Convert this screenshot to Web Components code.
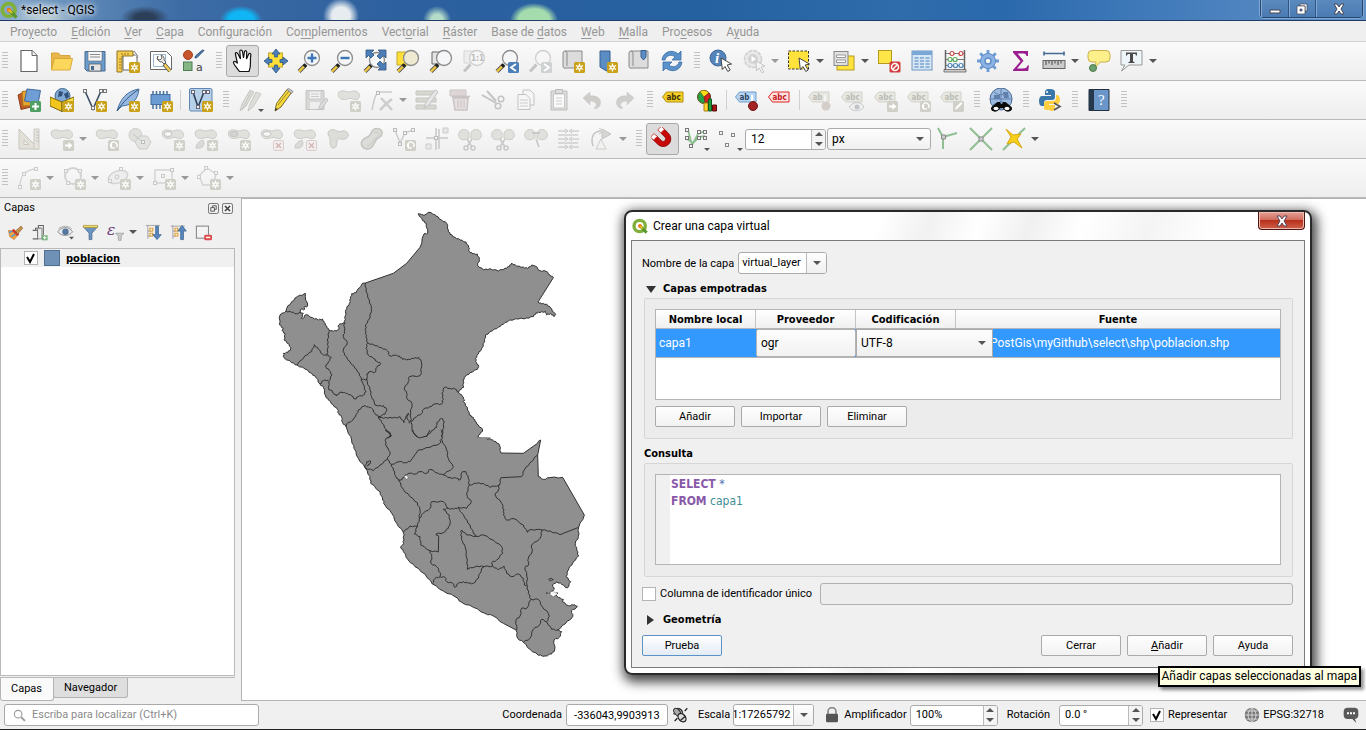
<!DOCTYPE html>
<html lang="es">
<head>
<meta charset="utf-8">
<title>*select - QGIS</title>
<style>
html,body{margin:0;height:100%}
body{font:11px/16px Roboto,"Liberation Sans",sans-serif;color:#000;background:#f0f0f0;overflow:hidden}
</style>
</head>
<body>
<qgis-window></qgis-window>
<script>
/* ---------- shared pieces ---------- */
const star = c => `<rect x="13" y="13" width="11" height="11" rx="1.500" fill="${c}"/><path d="M18.500 14.500v8M15 16.500l7 4M15 20.500l7-4" stroke="#fff" stroke-width="1.300"/><circle cx="18.500" cy="18.500" r="2.200" fill="#fff"/><circle cx="18.500" cy="18.500" r="1" fill="${c}"/>`;
const GOLD = '#c9a21a', DIM = '#d0d0c8';
const gold = star(GOLD), dim = star(DIM);
const badge = (inner, c = DIM) => `<rect x="13" y="13" width="11" height="11" rx="1.500" fill="${c}"/>${inner}`;
const arrowB = badge('<path d="M15 17.500h3.500V15l4 3.500-4 3.500v-2.500H15z" fill="#fff"/>');
const rotB = badge('<path d="M21.500 20a3.200 3.200 0 1 0-5 .500M16.500 17v3.800h3.500" fill="none" stroke="#fff" stroke-width="1.300"/>');
const xB = '<rect x="13.500" y="13.500" width="10" height="10" rx="1.500" fill="#f3eeee" stroke="#d8cccc"/><path d="M16 16l5 5M21 16l-5 5" stroke="#d5b8b8" stroke-width="1.600"/>';
const blob = '<path d="M1.500 8C0 3 5 2 9 3.500s5-1 9-.500c5 .500 6 7 2 8.500-3 1-5-2-8-1-4 1.500-9 2-10.500-2.500z" fill="#e0e0dc" stroke="#ccccc8"/>';
const mag = (x = 15, y = 9, c = '#f4f6f8', s = '#8c8c8c') => `<path d="M2 22.500l6.500-6.500" stroke="#555" stroke-width="4"/><path d="M2 22.500l5-5" stroke="#f0c93c" stroke-width="2.400"/><path d="M7 17.500l2-2" stroke="#222" stroke-width="3.500"/><circle cx="${x}" cy="${y}" r="7.500" fill="${c}" stroke="${s}" stroke-width="1.300"/>`;
const magDim = '<path d="M2 22.500l6.500-7" stroke="#c4c4c4" stroke-width="3"/><circle cx="15" cy="9" r="7.500" fill="#f6f6f6" stroke="#cfcfcf" stroke-width="1.300"/>';
const cursor = '<path d="M12 9l10.500 6-4.300 1 3 5-2.400 1.500-2.800-5-2.700 3z" fill="#fff" stroke="#444"/>';
const tag = (f, s, t, txt = 'abc') => `<path d="M.500 9l4-5H21v10H4.500z" fill="${f}" stroke="${s}"/><text x="4.500" y="12" font-family="DejaVu Sans Condensed" font-weight="700" font-size="8" fill="${t}">${txt}</text>`;
const tagDim = t => tag('#e8e8e2', '#d2d2cb', '#bcbcb7', t);
const scissors = '<path d="M9 12l5 8M14 12l-5 8" stroke="#c8c8c8" stroke-width="1.500"/><circle cx="8" cy="21" r="2" fill="none" stroke="#c8c8c8" stroke-width="1.500"/><circle cx="15" cy="21" r="2" fill="none" stroke="#c8c8c8" stroke-width="1.500"/>';
const lobes = '<path d="M11 11C2 16-1 9 1.500 5s8-3 9.500 1zM13 11c9 5 12-2 9.500-6s-8-3-9.500 1z" fill="#e0e0dc" stroke="#ccccc8"/>';
const nodes = (pts, c = '#bbb') => pts.map(([x, y]) => `<rect x="${x - 1.5}" y="${y - 1.5}" width="3" height="3" fill="#f4f4f4" stroke="${c}"/>`).join('');
const roll = '<path d="M4 2h17v17H5a2 2 0 0 1-3-2V4a2 2 0 0 1 4 0v13" fill="#dcdcdc" stroke="#8a8a8a"/>';

const ICONS = {
 new:'<path d="M4 1.500h11l5 5v16H4z" fill="#fff" stroke="#666" stroke-width="1.200"/><path d="M15 1.500v5h5" fill="#eee" stroke="#666"/>',
 open:'<path d="M1.500 20.500V4h7l2 2.500h9.500v3" fill="#e8b64a" stroke="#d6a53c"/><path d="M1.500 21L4.500 9.500h18L20 21z" fill="#fbd85c" stroke="#dba93a"/>',
 save:'<path d="M2 2.500h20v19.500H4l-2-2z" fill="#6a9cce" stroke="#45698f"/><path d="M5 2.500h14V12H5z" fill="#f7f7f7" stroke="#666" stroke-width=".600"/><path d="M7 5.500h10M7 8h10" stroke="#888"/><path d="M6 15h12v7H6z" fill="#e4e4e4" stroke="#555" stroke-width=".700"/><path d="M8 17h3v4H8z" fill="#45698f"/>',
 layout:'<path d="M7 6h14v15H7z" fill="#fff" stroke="#666"/><path d="M18 2l3 4v3" fill="#fff" stroke="#777"/><path d="M1 2h16v5H6v16H1z" fill="#f5cf52" stroke="#8d7323"/><path d="M6 4v2M9 4v2M12 4v2M3 10h2M3 13h2M3 16h2M3 19h2" stroke="#a5740f"/>'+gold,
 manager:'<path d="M1.500 2.500h16l5 5v13H1.500z" fill="#fff" stroke="#666"/><path d="M4.500 5.500h12v12h-12z" fill="none" stroke="#9bb5d0"/><path d="M9 7a4 4 0 0 0 4 6l2 2 2-2-2-2a4 4 0 0 0-3-5l1 3-2 2-3-1z" fill="#e8e8e8" stroke="#666"/><path d="M15 15l6 7" stroke="#555" stroke-width="4"/><path d="M15.500 15.500l5.500 6.500" stroke="#f3ce50" stroke-width="2.500"/>',
 style:'<circle cx="6" cy="6" r="4.500" fill="#c8562c" stroke="#a33f1c"/><path d="M22 1.500l-7 7-2 .500.500-2 7-6z" fill="#4d7cae" stroke="#2f5580"/><rect x="1.500" y="13" width="8.500" height="8.500" fill="#86b586" stroke="#4e7d52"/><text x="14" y="22" font-family="DejaVu Sans" font-size="11" fill="#444">a</text>',
 hand:'<path d="M8.500 22.500c-2-3-6-7-6-9 0-1.500 2-2 4 1L4.500 5.500c-.500-2.500 1.500-2.500 2.500-.500L9.500 10 8.800 2.500c0-2 2.200-2 2.700 0L12.500 9l.900-6c.400-2 2.500-1.500 2.300.500L15.500 10l2-4.500c1-2 2.800-1 2.300.800C18.500 12 21 16 18 22.500z" fill="#fff" stroke="#111" stroke-width="1.200"/>',
 pansel:'<rect x="4.500" y="4" width="14" height="14" fill="#ffe03a" stroke="#c2a72a"/><path d="M12 0l4 5h-2.500v3h-3V5H8zM12 24l4-5h-2.500v-3h-3v3H8zM0 12l5-4v2.500h3v3H5V16zM24 12l-5-4v2.500h-3v3h3V16z" fill="#4c7fb8" stroke="#2f577f" stroke-width=".800"/>',
 zin:mag()+'<path d="M15 4.500v9M10.500 9h9" stroke="#3d76b5" stroke-width="2.400"/>',
 zout:mag()+'<path d="M10.500 9h9" stroke="#3d76b5" stroke-width="2.400"/>',
 zfull:mag(14,11)+'<path d="M3 1h8L8.500 3.500 11 6 8 9 5.500 6.500 3 9zM23 1v8l-2.500-2.500L17 10l-3-3 3.500-3.500L15 1zM23 21h-8l2.500-2.500L14 15l3-3 3.500 3.500L23 13z" fill="#4c7fb8" stroke="#2f577f" stroke-width=".800"/>',
 zsel:'<path d="M1 3h12v13H1z" fill="#ffe03a" stroke="#c2a72a"/>'+mag(15,9,'#eeead2'),
 zlayer:'<path d="M3 3h12v12H3z" fill="#e5e5e5" stroke="#666"/>'+mag(),
 znative:'<path d="M2 2h12v12H2z" fill="#eee" stroke="#d5d5d5"/>'+magDim+'<text x="9" y="12" font-family="DejaVu Sans Condensed" font-weight="700" font-size="8" fill="#bbb">1:1</text>',
 zlast:mag()+badge('<path d="M21 15l-5 3.500 5 3.500" fill="none" stroke="#fff" stroke-width="1.800"/>','#4c7fb8'),
 znext:magDim+badge('<path d="M16 15l5 3.500-5 3.500" fill="none" stroke="#fff" stroke-width="1.800"/>','#cfd2d2'),
 mapnew:roll+gold,
 bmnew:'<path d="M6 2h10v16l-3.500 4L6 18z" fill="#5b8cc4" stroke="#36608f"/>'+gold,
 bmshow:roll+'<path d="M14 1.500h5V8l-2.500 3L14 8z" fill="#5b8cc4" stroke="#36608f"/>',
 refresh:'<path d="M2 11C3 2 13 0 18 5l3-3v9h-9l3-3C12 5 6 6 5 11zM22 13c-1 9-11 11-16 6l-3 3v-9h9l-3 3c3 3 9 2 10-3z" fill="#5b92cc" stroke="#3a6fa5" stroke-width=".800"/>',
 info:'<circle cx="9" cy="9" r="8" fill="#5584bb" stroke="#41699a"/><text x="6" y="14" font-family="Liberation Serif" font-style="italic" font-weight="700" font-size="15" fill="#fff">i</text>'+cursor,
 action:'<circle cx="11" cy="10" r="8.500" fill="#e8e8e8" stroke="#cfcfcf" stroke-width="1.500" stroke-dasharray="4 1"/><circle cx="11" cy="10" r="5" fill="#d3d3d3"/><path d="M9.500 7l4.500 3-4.500 3z" fill="#fff"/><path d="M14 12l9 5-4 1 3 5-2 1-3-5-2.500 3z" fill="#f4f4f4" stroke="#c6c6c6"/>',
 select:'<rect x="1.500" y="2" width="20" height="18" fill="#ffe23c" stroke="#333" stroke-dasharray="2.500 1.500"/>'+cursor,
 form:'<rect x="5" y="7" width="17" height="14" fill="#ffe23c" stroke="#b69a20"/><rect x="2" y="2.500" width="14" height="14" fill="#e1e1e1" stroke="#888"/><path d="M4.500 6h9v2.500h-9zM4.500 11h9v2.500h-9z" fill="#fff" stroke="#999"/>',
 desel:'<rect x="1.500" y="1.500" width="13" height="13" fill="#ffe648" stroke="#b69a20"/><rect x="12.500" y="12.500" width="11" height="11" rx="1.500" fill="#d23c3c"/><circle cx="18" cy="18" r="3.500" fill="none" stroke="#fff" stroke-width="1.500"/><path d="M15.500 20.500l5-5" stroke="#fff" stroke-width="1.500"/>',
 table:'<rect x="2" y="2" width="20" height="19" fill="#d5e6f5" stroke="#6f97c1"/><path d="M2 2h20v4H2z" fill="#7ba7d6"/><path d="M4.500 9h4M10 9h4M15.500 9h4M4.500 12h4M10 12h4M15.500 12h4M4.500 15h4M10 15h4M15.500 15h4M4.500 18h4M10 18h4M15.500 18h4" stroke="#7ba3ce" stroke-width="1.400"/>',
 abacus:'<path d="M2.500 1v21M21.500 1v21" stroke="#666" stroke-width="1.500"/><path d="M1 20.500h22v2.500H1z" fill="#ccc" stroke="#555" stroke-width=".700"/><path d="M3 4.500h18M3 10.500h18M3 16.500h18" stroke="#777"/><g fill="#fff" stroke-width="1.200"><g stroke="#cc4444"><circle cx="9" cy="4.500" r="2"/><circle cx="18" cy="4.500" r="2"/></g><g stroke="#58a858"><circle cx="7" cy="10.500" r="2"/><circle cx="12" cy="10.500" r="2"/></g><g stroke="#4c86b8"><circle cx="7" cy="16.500" r="2"/><circle cx="12.500" cy="16.500" r="2"/><circle cx="18" cy="16.500" r="2"/></g></g>',
 gear:'<g fill="none" stroke="#6d9bd4"><path d="M12 1v22M1 12h22M4.200 4.200l15.600 15.600M19.800 4.200L4.200 19.800" stroke-width="2.800"/></g><circle cx="12" cy="12" r="7.500" fill="#8db2e4" stroke="#5e8cc6"/><circle cx="12" cy="12" r="3" fill="#f4f4f4" stroke="#5e8cc6" stroke-width="1.500"/>',
 sum:'<path d="M4 2h15v5h-1.500c-.500-2-1.500-2.500-4-2.500H8.500l6 7.200-6.500 7.800h6c3 0 4-1 4.500-3H20l-.800 5.500H4V21l7.500-8.800L4 3.500z" fill="#9b1c8f"/>',
 measure:'<path d="M2 4.500h20M2 2.500v4M22 2.500v4" stroke="#456a92" stroke-width="1.600"/><rect x="1" y="11.500" width="22" height="8" fill="#ccc" stroke="#666"/><path d="M4 12v4M7 12v2.500M10 12v4M13 12v2.500M16 12v4M19 12v2.500" stroke="#444"/>',
 tip:'<path d="M5 1.500h14a4 4 0 0 1 4 4V9a4 4 0 0 1-4 4h-6l-5 6 1-6H5a4 4 0 0 1-4-4V5.500a4 4 0 0 1 4-4z" fill="#fdf08a" stroke="#c9b04d"/><circle cx="6" cy="19" r="3.500" fill="#6ca06c" stroke="#4a7a4e"/>',
 note:'<path d="M1 1.500h21V16H9l-7.500 6L5 16H1z" fill="#eef5f8" stroke="#999"/><path d="M6 3.500h11v3h-1l-.700-1.500H13v7.500l1.500.500v1h-6v-1l1.500-.500V5H7.700L7 6.500H6z" fill="#4a4a4a"/>',
 srcman:'<path d="M1 7l6-3 7 15-10 2.500z" fill="#c05a2a" stroke="#93421a"/><path d="M5 3.500l8-1 4 15-11 .500z" fill="#e8a52e" stroke="#a8761c"/><path d="M10 1l13.500 1.500L21 15.500 7.500 13z" fill="#6f9ed6" stroke="#41699a"/>'+badge('<path d="M18.500 15v7M15 18.500h7" stroke="#fff" stroke-width="2"/>','#4f9e62'),
 geopkg:'<circle cx="12.500" cy="8" r="7.500" fill="#7fa8d4" stroke="#43698f"/><path d="M9 3l4 1-1 4-4 1zM14 6l4-2 1 5-3 2z" fill="#2f4f77"/><path d="M0 9l12 5v9.500L0 18z" fill="#f2c61d" stroke="#7a6310"/><path d="M24 9l-12 5v9.500L24 18z" fill="#f9e14b" stroke="#7a6310"/>'+gold,
 vnew:'<path d="M2 3l8 18L18 3l4 0" fill="none" stroke="#3d4f66" stroke-width="1.600"/>'+nodes([[2,3],[18,3],[22,3],[10,20]],'#777')+gold,
 feather:'<path d="M1 23C4 12 10 3 23 1c-1 10-6 16-17 17z" fill="#94b8e2" stroke="#456f9f"/><path d="M1 23C7 14 14 7 22 2" fill="none" stroke="#35577f"/>'+gold,
 chip:'<path d="M4 3v18M7.500 3v18M11 3v18M14.500 3v18M18 3v10" stroke="#456f9f" stroke-width="1.500"/><rect x="2" y="6.500" width="19" height="10" fill="#6b9bd3" stroke="#456f9f"/>'+gold,
 virt:'<rect x=".500" y=".500" width="22.500" height="22.500" rx="1.500" fill="#b8d1ea" stroke="#5f87b1"/><path d="M4 4l5 15L15 4h4" fill="none" stroke="#2f4056" stroke-width="1.600"/>'+nodes([[4,4],[15,4],[19,4],[9,19]],'#667')+gold,
 edits:'<path d="M2 23l2-7L12 2l4 2-8 14zM10 23l2-7L18 4l5 2-8 13z" fill="#ddddd9" stroke="#c8c8c4"/><path d="M4 22l9-18" stroke="#c5c5c5"/>',
 pencil:'<path d="M4 23l1.500-7.500L16 1.500l4.500 3L10 19z" fill="#f7d83c" stroke="#77682a"/><path d="M7 17L18 3" stroke="#a08a2c"/><path d="M16 1.500l1.500-1 4.500 3-1.500 2z" fill="#ccc" stroke="#888"/><path d="M4 23l.700-3 2 1z" fill="#333"/>',
 savee:'<path d="M2 2.500h18v19H2z" fill="#d8d8d6" stroke="#c4c4c2"/><path d="M5 3h12v8H5z" fill="#f1f1f1" stroke="#cacaca"/><path d="M7 6h8M7 8.500h8" stroke="#cacaca"/><path d="M6 14h10v7H6z" fill="#eee"/><path d="M14 22l2-5 6-7 2 2-6 8z" fill="#ddd" stroke="#c2c2c2"/>',
 addpoly:blob+dim,
 vertex:'<path d="M2 22C4 12 5 5 10 4h12" fill="none" stroke="#cacaca" stroke-width="1.500"/>'+nodes([[8,5]])+'<path d="M11 10l11 12M22 11l-6 5-6 6" stroke="#cdcdcb" stroke-width="2.500"/>',
 multi:'<path d="M1 3h20v4H1zM1 10h20v4H1zM1 17h20v4H1z" fill="#d8d8d2" stroke="#c6c6c1"/><path d="M9 20l2-6 9-12 3 2-9 13z" fill="#e6e6e6" stroke="#c2c2c2"/>',
 trash:'<path d="M2 2h16v6H2z" fill="#ded6d6" stroke="#cac6c4"/><path d="M5 10h15l-1 12H7zM4 8.500h18" fill="#e5dfdf" stroke="#cac4c4" stroke-width="1.500"/><path d="M10 12v8M13 12v8M16 12v8" stroke="#cac4c4"/>',
 cut:'<path d="M1 7l14 8M6 3l9 10" stroke="#c4c4c4" stroke-width="2"/><circle cx="20" cy="11" r="2.800" fill="none" stroke="#c4c4c4" stroke-width="1.500"/><circle cx="17" cy="18" r="2.800" fill="none" stroke="#c4c4c4" stroke-width="1.500"/>',
 copy:'<path d="M9 2h7l4 4v11H9z" fill="#f6f6f6" stroke="#c2c2c2"/><path d="M4 6.500h8l4 4v11H4z" fill="#f6f6f6" stroke="#c2c2c2"/><path d="M6 12h8M6 15h8M6 18h8" stroke="#ccc"/>',
 paste:'<path d="M4 3h16v19H4z" fill="#dcdcda" stroke="#bdbdbb"/><path d="M6.500 6h11v14h-11z" fill="#fafafa" stroke="#c8c8c8"/><path d="M8.500 1.500h7v4h-7z" fill="#ddd" stroke="#bbb"/><path d="M9 10h6M9 13h6M9 16h6" stroke="#ccc"/>',
 undo:'<path d="M3 10l7-6v4c8-1 12 4 10 9-1 3-4 4-6 3 4-2 3-7-4-7v4z" fill="#cfcdca" stroke="#c5c3c0" stroke-width=".500"/>',
 redo:'<path d="M21 10l-7-6v4C6 7 2 12 4 17c1 3 4 4 6 3-4-2-3-7 4-7v4z" fill="#cfcfcd" stroke="#c5c5c3" stroke-width=".500"/>',
 lab:tag('#f5cf24','#b08f12','#3c3208'),
 diag:'<circle cx="9" cy="9" r="6.500" fill="#27a144" stroke="#5a4a10"/><path d="M9 9L5 3.500a6.500 6.500 0 0 1 9 1.500z" fill="#ffdc18" stroke="#5a4a10" stroke-width=".500"/><path d="M9 9l5-4a6.500 6.500 0 0 1-4 10z" fill="#d92020" stroke="#5a1010" stroke-width=".500"/><path d="M9 15h4v8H9z" fill="#ffd428" stroke="#a87f12"/><path d="M13.500 11h3v12h-3z" fill="#1f9a3c" stroke="#0f5a20"/><path d="M17.500 17h4v6h-4z" fill="#a81616" stroke="#5a0c0c"/>',
 labpin:tag('#b9d5f4','#6f9cc9','#2c4767','ab')+'<path d="M17 7v9" stroke="#fff" stroke-width="2"/><circle cx="18" cy="18" r="4.500" fill="#a32222" stroke="#701414"/>',
 labred:tag('#ffe3e3','#d22','#c81a1a'),
 lpin:tagDim('ab')+'<path d="M17 7v9" stroke="#f4f4f4" stroke-width="2"/><circle cx="18" cy="18" r="4.500" fill="#d4cecb"/>',
 leye:tagDim('abc')+'<path d="M8 19c4-6 12-6 15 0-4 5-11 5-15 0z" fill="#eee" stroke="#c8c8c8"/><circle cx="16" cy="19" r="2.500" fill="#c0c4c8"/>',
 lmove:tagDim('abc')+arrowB,
 lrot:tagDim('abc')+rotB,
 ledit:tagDim('abc')+badge('<path d="M15 22l1-3 5-5 1.500 1.500-5 5z" fill="#fff"/>'),
 metas:'<circle cx="12" cy="11" r="11" fill="#9dbbe0" stroke="#4a6a94"/><path d="M5 4c6 5 10 2 14 0M1 11h22M12 0v22M4 17c5-4 11-4 16 0" stroke="#5f7fac" fill="none"/><path d="M5 7h6v4H5zM14 4h5l1 6h-5z" fill="#5f80ab"/><path d="M8.500 14h2.500l1 2h1l1-2h2.500l6 5c2 3-2 6-6 4l-3-3h-2l-3 3c-4 2-8-1-6-4z" fill="#0a0a0a"/><ellipse cx="7" cy="20.500" rx="2.500" ry="1.800" fill="#fff"/><ellipse cx="18" cy="20.500" rx="2.500" ry="1.800" fill="#fff"/>',
 python:'<path d="M12 1c-5 0-5 2-5 4v2h6v1H4C2 8 1 10 1 13s1 5 3 5h2v-3c0-2 1-3 3-3h5c2 0 3-1 3-3V4c0-2-2-3-5-3z" fill="#3a77a8"/><path d="M12 23c5 0 5-2 5-4v-2h-6v-1h8c2 0 3-2 3-4s-1-5-3-5h-1v3c0 2-1 3-3 3H9c-2 0-3 1-3 3v4c0 2 2 2 6 2z" fill="#fbcf3f"/><circle cx="9" cy="4" r="1" fill="#fff"/><path d="M16 15l6 3.500-6 3.500" fill="none" stroke="#555" stroke-width="1.600"/>',
 help:'<path d="M2 1.500h20v21H2z" fill="#6b96ca" stroke="#23313f"/><path d="M2 1.500h5v21H2z" fill="#26394c"/><text x="11" y="17" font-family="Liberation Serif" font-size="15" fill="#fff">?</text>',
 cad:'<path d="M2 2v20h20zM7 13v4.500h4.500z" fill="#e3e0d9" stroke="#c9c6be" fill-rule="evenodd"/><path d="M17 2h5v20h-5z" fill="#e8e5de" stroke="#ccc9c1"/><path d="M19 5h3M19 8h3M19 11h3M19 14h3" stroke="#c2c2c2"/>',
 move:blob+arrowB, rotate:blob+rotB,
 simplify:'<circle cx="7.500" cy="8" r="6.500" fill="#e0e0dc" stroke="#ccccc8"/><path d="M11 9h8l4 6-4 7h-8l-4-7z" fill="#e2e4e2" stroke="#ccccc8"/><path d="M5 7l10 8" stroke="#c6c6c6"/>'+nodes([[15,15]]),
 ring:blob+'<ellipse cx="7" cy="7" rx="4" ry="2.500" fill="#f7f7f7" stroke="#c2c2c2"/>'+dim,
 part:blob+'<path d="M2 21c0-5 4-7 7-8 2 4 1 9-7 8z" fill="#d9dbd9" stroke="#cacac6"/>'+dim,
 fill:blob+'<ellipse cx="7" cy="7" rx="4" ry="2.500" fill="#d3d6d3" stroke="#c2c2c2"/>'+dim,
 delring:blob+'<ellipse cx="7" cy="7" rx="4" ry="2.500" fill="#f7f7f7" stroke="#c2c2c2"/>'+xB,
 delpart:blob+'<path d="M2 21c0-5 4-7 7-8 2 4 1 9-7 8z" fill="#d9dbd9" stroke="#cacac6"/>'+xB,
 reshape:'<path d="M2 6c1-4 6-4 9-2s5-1 8 0c5 2 4 7 0 8s-5-1-7 0 0 8-4 9-4-5-4-9c0-2-2-3-2-6z" fill="#dcdcd8" stroke="#c8c8c4"/>',
 offset:'<path d="M14 3c3-3 10-1 9 4-1 4-4 3-6 6s-3 9-8 9-8-4-6-8 6-3 8-6 1-3 3-5z" fill="#dcdcd8" stroke="#c4c4c0" stroke-width="1.500"/><path d="M15 6c3-2 6 0 5 2s-4 3-6 6-3 5-6 5" fill="none" stroke="#c8c8c4"/>',
 splitv:'<path d="M3 3l5 13 5-10 8-3" fill="none" stroke="#ccc" stroke-width="1.500"/>'+nodes([[3,3],[8,17],[13,6],[21,3]])+rotB,
 merge:'<path d="M1 11h22M11 1v22M14 2v20" stroke="#c8c8c8" stroke-width="1.500"/>'+nodes([[11,11],[21,3],[3,20]])+'<path d="M18 1h5v5h-5zM1 17h5v5H1z" fill="#ebe6e6" stroke="#ccc"/>',
 split1:lobes+scissors, split2:lobes+'<g>'+scissors+'</g>',
 merge2:lobes+'<path d="M8 6h8M12 12l3 8" stroke="#c4c4c4" stroke-width="1.500"/>',
 attrs:'<path d="M1 4h8M14 4h8M1 12h8M14 12h8M1 20h8M14 20h8M1 8h20M1 16h20" stroke="#d0d0ce" stroke-width="1.500"/><path d="M8 2l3 2-3 2M15 2l-3 2 3 2M8 10l3 2-3 2M15 10l-3 2 3 2M8 18l3 2-3 2M15 18l-3 2 3 2" fill="none" stroke="#c4c4c4"/>',
 rotsym:'<path d="M3 19C0 10 4 4 11 4" fill="none" stroke="#c4c4c4" stroke-width="1.500"/><path d="M9 1l5 3-5 3" fill="none" stroke="#c4c4c4"/><path d="M12 2l9 5-9 5z" fill="#d4d6d4" stroke="#c6c6c4"/><path d="M11 12l5 10H6z" fill="#f2f2f0" stroke="#ccccca"/>',
 magnet:'<g transform="rotate(-45 12 12) translate(2 1) scale(.850)"><path d="M3 4v9a9 9 0 0 0 18 0V4h-6v9a3 3 0 0 1-6 0V4z" fill="#c90808" stroke="#8d0808"/><path d="M3 1h6v5H3zM15 1h6v5h-6z" fill="#fff" stroke="#c33"/></g>',
 snapv:'<path d="M4 3l4 15 6-11 7-3M3 12l6 4 6-6 6-1" fill="none" stroke="#8cc08f" stroke-width="1.800"/>'+nodes([[3,3],[15,5],[21,5],[7,19],[15,11],[21,11],[3,11]],'#777'),
 snapn:nodes([[4,6],[16,8],[10,18]],'#888'),
 topo:'<path d="M2 1l5 9M7 10v12M7 10l14-4" stroke="#8fbf93" stroke-width="2"/><path d="M5.500 8h4v4h-4z" fill="#ccc" stroke="#888"/>',
 cross:'<path d="M1 1l22 22M23 1L1 23" stroke="#8fbf93" stroke-width="2"/><path d="M10 10h4v4h-4z" fill="#ccc" stroke="#888"/>',
 trace:'<path d="M23 1L1 23" stroke="#8fbf93" stroke-width="2"/><path d="M4 2l7 6 8-1-4 5 5 9-8-6-7 2 4-7z" fill="#f5cf18" stroke="#d9a70f"/>',
 arc:'<path d="M3 21C3 9 8 4 19 3" fill="none" stroke="#d3d3d3" stroke-width="1.300"/>'+nodes([[3,21],[7,8],[19,3]],'#ccc')+dim,
 circ:'<circle cx="11" cy="10" r="8" fill="none" stroke="#d3d3d3" stroke-width="2"/>'+nodes([[4,5],[18,5],[6,17]],'#ccc')+dim,
 elli:'<ellipse cx="11" cy="11" rx="10" ry="6" transform="rotate(-20 11 11)" fill="#eee" stroke="#d3d3d3" stroke-width="1.500"/><circle cx="10" cy="11" r="2" fill="none" stroke="#c8c8c8"/>'+nodes([[14,3],[3,15]],'#ccc')+dim,
 rect:'<path d="M3 4h17v13H3z" fill="none" stroke="#d3d3d3" stroke-width="1.500"/>'+nodes([[3,17],[20,4],[11,10]],'#c8c8c8')+dim,
 pent:'<path d="M10 2l9 6-3 11H6L2 10z" fill="none" stroke="#d3d3d3" stroke-width="1.500"/>'+nodes([[9,2],[2,11],[19,7]],'#ccc')+dim,
 brush:'<path d="M2 9l7 1 6 6-5 6-6-4z" fill="#f0a63a" stroke="#c9742a"/><path d="M3 12l5-2M6 18l6-4" stroke="#4d9be0" stroke-width="2"/><path d="M8 8l8 8" stroke="#cc3e2c" stroke-width="4"/><path d="M12 10l8-7 2 3-7 8z" fill="#c99552" stroke="#8a5a22"/>',
 group:'<path d="M1 9h7v12H1M5 9V6h8M9 6V2h7v14" fill="none" stroke="#666" stroke-width="1.500"/><path d="M8 6h6v15H8z" fill="#eee" stroke="#666"/><path d="M14 16h8v7h-8z" fill="#6fae75"/><path d="M18 17v5M15.500 19.500h5" stroke="#fff" stroke-width="1.500"/>',
 eye:'<path d="M1 11C6 3 17 3 22 11c-5 7-16 7-21 0z" fill="#e6e9ec" stroke="#777"/><circle cx="12" cy="11" r="4.500" fill="#56759c"/><path d="M2 7c5-5 15-5 19 0" fill="none" stroke="#999"/><path d="M17 18h7l-3.500 4z" fill="#555"/>',
 funnel:'<path d="M2 4h20l-8 9v9h-4v-9z" fill="#6b94c2" stroke="#42658c"/><path d="M2 2h20v3H2z" fill="#f2dc68" stroke="#a89138"/>',
 eps:'<text x="0" y="15" font-family="DejaVu Serif" font-size="22" font-style="italic" fill="#6a3a78">ε</text><path d="M12 13h12l-4 4v6h-4v-6z" fill="#ccc" stroke="#999"/>',
 expand:'<path d="M4 2v19M1 2h20M4 10h5M4 17h5" stroke="#888" fill="none"/><path d="M7 6h4v4H7zM7 13h4v4H7z" fill="#fff" stroke="#e29a28" stroke-width="1.500"/><path d="M15 3h4v12h4l-6 7-6-7h4z" fill="#5787bd" stroke="#345d8c"/>',
 collapse:'<path d="M4 2v19M1 3h20M4 10h5M4 17h5" stroke="#888" fill="none"/><path d="M7 6h4v4H7zM7 13h4v4H7z" fill="#fff" stroke="#e29a28" stroke-width="1.500"/><path d="M15 22h4V10h4l-6-8-6 8h4z" fill="#5787bd" stroke="#345d8c"/>',
 remove:'<rect x="2" y="3" width="17" height="17" fill="#f4f4f4" stroke="#888" stroke-width="1.500"/><rect x="13" y="15" width="11" height="8" rx="2" fill="#dd4d4d"/><path d="M15.500 19h6" stroke="#fff" stroke-width="2"/>',
 float:'<rect x="1" y="1" width="22" height="22" rx="4" fill="none" stroke="#666" stroke-width="2"/><path d="M6 10h8v8H6zM10 10V6h8v8h-4" fill="none" stroke="#555" stroke-width="2"/>',
 close:'<rect x="1" y="1" width="22" height="22" rx="4" fill="none" stroke="#666" stroke-width="2"/><path d="M6.500 6.500l11 11M17.500 6.500l-11 11" stroke="#444" stroke-width="3.500"/>',
 logo:'<circle cx="11.500" cy="12" r="8.500" fill="none" stroke="#7fb03a" stroke-width="5"/><path d="M12 12l10 10" stroke="#5b9630" stroke-width="4.500"/><circle cx="12" cy="12" r="3" fill="#ee7913"/><path d="M12 12l4 4" stroke="#f0c020" stroke-width="2.500"/>',
 search:'<circle cx="9.500" cy="9.500" r="7" fill="none" stroke="#999" stroke-width="2"/><path d="M15 15l7 7" stroke="#999" stroke-width="3.500"/>',
 mouse:'<path d="M3 5c4-4 8 0 10 4M8 2c6 0 8 5 8 8M2 10l15 3" fill="none" stroke="#333" stroke-width="2"/><ellipse cx="8" cy="8" rx="4" ry="7" transform="rotate(-40 8 8)" fill="#aaa" stroke="#333" stroke-width="1.500"/><ellipse cx="15" cy="16" rx="5" ry="7" transform="rotate(-40 15 16)" fill="#ddd" stroke="#222" stroke-width="2"/><path d="M13 20l7-6M19 6l4-4M4 21l4-4" stroke="#222" stroke-width="2"/>',
 lock:'<path d="M6 12V7a6 6 0 0 1 12 0v5" fill="none" stroke="#888" stroke-width="2.500"/><rect x="3" y="10" width="18" height="13" rx="2" fill="#555"/>',
 globe:'<circle cx="12" cy="12" r="11" fill="#777"/><path d="M12 1v22M1 12h22M4 6h16M4 18h16M12 1c-8 6-8 16 0 22M12 1c8 6 8 16 0 22" stroke="#e8e8e8" fill="none" stroke-width="1.200"/>',
 chat:'<path d="M7 1h10a6 6 0 0 1 6 6v5a6 6 0 0 1-5 6l2 6-6-6H7a6 6 0 0 1-6-6V7a6 6 0 0 1 6-6z" fill="#5a5a5a"/><path d="M6 8h3v3H6zM10.500 8h3v3h-3zM15 8h3v3h-3z" fill="#fff"/>'
};

class Piece extends HTMLElement {
  render(css, html) {
    const t = document.createElement('template');
    t.innerHTML = `<style>*{box-sizing:border-box}button,input,select{font:inherit;color:inherit;margin:0}${css}</style>${html}`;
    this.attachShadow({ mode: 'open' }).append(t.content.cloneNode(true));
  }
}
const define = (name, css, html) => customElements.define(name, class extends Piece {
  constructor() { super(); this.render(css, html); }
});
/* these read their attributes, so their content is built on connection */
const defineLate = (name, css, html) => customElements.define(name, class extends Piece {
  connectedCallback() { if (!this.shadowRoot) this.render(css, html(this)); }
});
const attr = (el, n, d = '') => el.getAttribute(n) ?? d;

defineLate('q-icon', ':host{display:inline-block;flex:none;width:24px;height:24px}svg{display:block;width:100%;height:100%}',
  el => `<svg viewBox="0 0 24 24" aria-hidden="true">${ICONS[attr(el, 'name')]}</svg>`);

defineLate('tool-button', `
:host{display:block;flex:none}
button{display:flex;align-items:center;justify-content:center;width:33px;height:32px;padding:0;border:1px solid transparent;border-radius:3px;background:none;position:relative}
:host([menu]) button{width:45px;justify-content:flex-start;padding-left:4px;gap:5px}
:host([on]) button{background:#dcdcdc;border-color:#a8a8a8}
i{width:0;border:4px solid transparent;border-top-color:#555;border-bottom:0}
:host([dimmenu]) i{border-top-color:#999}
:host([mini]) i{position:absolute;right:1px;bottom:3px;border-width:3px;border-bottom:0}`,
  el => `<button aria-label="${attr(el, 'label', attr(el, 'icon'))}"><q-icon name="${attr(el, 'icon')}"></q-icon>${el.hasAttribute('menu') || el.hasAttribute('mini') ? '<i></i>' : ''}</button>`);

define('tool-grip', `:host{display:flex;flex:none;width:16px;height:18px;padding-right:4px;justify-content:flex-end}
:host(:first-child){width:12px}
span{width:6px;background:conic-gradient(#b8b8b8 90deg,transparent 0) 1px 1px/3px 3px;background:linear-gradient(#c2c2c2,#c2c2c2) 0 0/1px 1px,linear-gradient(90deg,#bebebe 1px,transparent 1px) 0 0/3px 3px;-webkit-mask:linear-gradient(#000 1px,transparent 1px) 0 0/3px 3px}`, '<span></span>');
define('tool-sep', ':host{display:flex;flex:none;width:7px;height:20px;justify-content:center}span{width:1px;background:#d0d0d0}', '<span></span>');
define('tool-row', ':host{display:flex;align-items:center;height:39px;background:linear-gradient(#fafafa,#eee);border-bottom:1px solid #b9b9b9}', '<slot></slot>');

defineLate('spin-box', `
:host{display:flex;background:#fff;border:1px solid #aaa;border-radius:3px;height:21px;overflow:hidden}
input{flex:1;min-width:0;border:0;padding:0 5px;outline:0;background:none}
span{display:flex;flex-direction:column;width:14px;border-left:1px solid #bbb;background:#f4f4f4}
button{flex:1;border:0;background:none;padding:0;display:flex;align-items:center;justify-content:center}
i{border:4px solid transparent;border-top-color:#555;border-bottom:0}i.up{border-bottom:4px solid #555;border-top:0}`,
  el => `<input aria-label="${attr(el, 'label')}" value="${attr(el, 'value')}"><span><button aria-label="Aumentar"><i class="up"></i></button><button aria-label="Reducir"><i></i></button></span>`);

defineLate('edit-combo', `
:host{display:flex;background:#fff;border:1px solid #aaa;border-radius:3px;height:22px;overflow:hidden}
input{flex:1;min-width:0;border:0;padding:0 0 0 3px;outline:0;background:none}
:host([clip]) input{text-indent:-2px;padding:0}
button{width:20px;border:0;border-left:1px solid #bbb;background:linear-gradient(#fdfdfd,#f0f0f0);padding:0;display:flex;align-items:center;justify-content:center}
i{border:4px solid transparent;border-top-color:#555;border-bottom:0}`,
  el => `<input aria-label="${attr(el, 'label')}" value="${attr(el, 'value')}"><button aria-label="Desplegar"><i></i></button>`);

defineLate('pick-list', `
:host{display:flex;position:relative;height:22px}
select{appearance:none;width:100%;border:1px solid #aaa;border-radius:3px;background:linear-gradient(#fdfdfd,#f0f0f0);padding:0 4px;outline:0}
:host([flat]) select{border-radius:0}
i{position:absolute;right:7px;top:50%;margin-top:-2px;border:4px solid transparent;border-top-color:#555;border-bottom:0;pointer-events:none}`,
  el => `<select aria-label="${attr(el, 'label')}"><option>${attr(el, 'value')}</option></select><i></i>`);

define('push-button', `
:host{display:block;width:80px}
button{width:100%;height:21px;padding:0;border:1px solid #aaa;border-radius:2px;background:linear-gradient(#fefefe,#f2f2f2);font-size:11px}
:host([primary]) button{border-color:#5b93c9;background:linear-gradient(#fff,#e3ebf4)}`, '<button><slot></slot></button>');

defineLate('check-field', `
:host{display:flex}label{display:flex;align-items:center;gap:var(--gap,4px)}
input{appearance:none;width:14px;height:14px;background:#fff;border:1px solid #b4b4b4;display:grid;place-items:center}
svg{width:12px;height:12px;display:none;grid-area:1/1;pointer-events:none}
span{display:grid}span input{grid-area:1/1}span svg{margin:1px}
input:checked+svg{display:block}`,
  el => `<label><span><input type="checkbox" ${el.hasAttribute('checked') ? 'checked' : ''}><svg viewBox="0 0 12 12" aria-hidden="true"><path d="M2 5l3 5 4-8" fill="none" stroke="#000" stroke-width="2"/></svg></span><slot></slot></label>`);

/* ---------- window frame ---------- */
define('title-bar', `
:host{display:flex;align-items:center;height:21px;padding-right:3px;font-size:12px;border-bottom:1px solid #1f3b66;
background:radial-gradient(ellipse 40px 20px at 45px 20px,#d9e3dccc,transparent),
radial-gradient(ellipse 24px 12px at 145px 18px,#2c3e58 40%,transparent),radial-gradient(ellipse 21px 14px at 241px 20px,#0fb5f5 60%,transparent),
radial-gradient(ellipse 18px 18px at 341px 16px,#e6ecf0 50%,transparent),radial-gradient(ellipse 14px 14px at 437px 20px,#b4dcc8 40%,transparent),
radial-gradient(ellipse 24px 17px at 534px 20px,#a4dcae 65%,transparent),
linear-gradient(90deg,#86aacd 0,#5984b4 95px,#3d6ca5 180px,#2d609f 400px,#2561a0 700px,#2e6cab 900px,#2a69ac 1000px,#3c77b8 1120px,#6090c6 100%)}
q-icon{width:18px;height:18px}
h1{font:inherit;margin:0 auto 0 3px;text-shadow:0 0 4px #fff,0 0 8px #fff}
div{display:flex;align-self:flex-start;height:18px;border:1px solid #24466f;border-top:0;border-radius:0 0 4px 4px;box-shadow:0 0 0 1px #7fa8d4}
button{width:27px;padding:0;border:0;border-left:1px solid #2d5484;background:linear-gradient(#5b89bd,#4a7bb3);box-shadow:inset 1px 0 #84abd6;display:flex;align-items:center;justify-content:center}
button:last-child{width:47px}button:first-child{border-left:0}svg{width:14px;height:12px}`,
`<q-icon name="logo"></q-icon><h1>*select - QGIS</h1>
<div><button aria-label="Minimizar"><svg viewBox="0 0 14 12"><path d="M2 7h10v3H2z" fill="#fff" stroke="#445"/></svg></button>
<button aria-label="Restaurar"><svg viewBox="0 0 14 12"><path d="M5 1h7v7h-2V3H5z" fill="#fff" stroke="#445" stroke-width=".700"/><path d="M2 3h8v8H2zM5 6v2h2V6z" fill="#fff" fill-rule="evenodd" stroke="#445" stroke-width=".700"/></svg></button>
<button aria-label="Cerrar"><svg viewBox="0 0 14 12"><path d="M2 1h3l2 3 2-3h3L9 6l3 5H9L7 8l-2 3H2l3-5z" fill="#fff" stroke="#445"/></svg></button></div>`);

const MENUS = ['Pro<u>y</u>ecto', '<u>E</u>dición', '<u>V</u>er', '<u>C</u>apa', 'Confi<u>g</u>uración', 'Co<u>m</u>plementos', 'Vect<u>o</u>rial', '<u>R</u>áster', 'Base de <u>d</u>atos', '<u>W</u>eb', '<u>M</u>alla', 'Pro<u>c</u>esos', 'A<u>y</u>uda'];
define('menu-bar', `:host{display:block;background:#efefef;border-bottom:1px solid #d0d0d0}
nav{display:flex;gap:14px;height:20px;align-items:center;padding:1px 0 0 10px;font-size:12px;color:#969696}
button{padding:0;border:0;background:none}u{text-underline-offset:2px}`, `<nav>${MENUS.map(m => `<button>${m}</button>`).join('')}</nav>`);

/* Row script: "|" grip, "/" separator, suffix v menu, V dim menu, m mini arrow, * pressed */
const tools = s => s.split(' ').map(w => {
  if (w === '|') return '<tool-grip></tool-grip>';
  if (w === '/') return '<tool-sep></tool-sep>';
  const [n, f = ''] = w.split(':');
  return `<tool-button icon="${n}" ${/[vV]/.test(f) ? 'menu' : ''} ${/V/.test(f) ? 'dimmenu' : ''} ${/m/.test(f) ? 'mini' : ''} ${/\*/.test(f) ? 'on' : ''}></tool-button>`;
}).join('');
define('tool-area', `:host{display:block}spin-box{width:81px;margin-right:1px}pick-list{width:104px}spin-box,pick-list{flex:none;font-size:12px}`,
`<tool-row>${tools('| new open save layout manager style | hand:* pansel zin zout zfull zsel zlayer znative zlast znext mapnew bmnew bmshow refresh | info action:V select:v form:v desel table abacus gear sum measure:v tip note:v')}</tool-row>
<tool-row>${tools('| srcman geopkg vnew feather chip / virt | edits:m pencil savee addpoly vertex:V multi trash cut copy paste undo redo | lab diag / labpin labred / lpin leye lmove lrot ledit | metas | python | help |')}</tool-row>
<tool-row>${tools('| cad move:V rotate simplify ring part fill delring delpart reshape offset splitv merge split1 split2 merge2 attrs rotsym:V | magnet:* snapv:m snapn:m')}<spin-box label="Tolerancia" value="12"></spin-box><pick-list label="Unidades" value="px"></pick-list>${tools('topo cross trace:v')}</tool-row>
<tool-row>${tools('| arc:V circ:V elli:V rect:V pent:V')}</tool-row>`);

/* ---------- layers panel ---------- */
define('layer-panel', `
:host{display:flex;flex-direction:column;width:235px;flex:none}
header{display:flex;align-items:center;height:20px;padding:0 2px 0 4px;gap:3px}
h2{font:inherit;margin:0 auto 0 0}
header button,.tools button{border:0;background:none;padding:0;display:flex}
header q-icon{width:11px;height:11px}
.tools{display:flex;align-items:center;gap:8px;height:30px;padding:0 0 2px 7px}
.tools q-icon{width:17px;height:17px}
.tools i{align-self:center;margin-left:5px;border:4px solid transparent;border-top-color:#555;border-bottom:0}
.tree{flex:1;margin:0;padding:0;list-style:none;background:#fff;border:1px solid #b9b9b9}
li{display:flex;align-items:center;height:18px;background:#f0f0f0;padding-left:23px;font:700 11px/16px "DejaVu Sans Condensed","DejaVu Sans",sans-serif}
li b{text-decoration:underline;padding-top:1px}check-field{--gap:6px}
.swatch{display:inline-block;flex:none;width:16px;height:16px;background:#6f91b5;border:1px solid #50708f}
.tabs{display:flex;align-items:flex-start;margin-top:1px;border-top:1px solid #b9b9b9;height:24px}
.tabs button{border:1px solid #b4b4b4;border-top:0;background:#dedede;height:20px;padding:0 10px;border-radius:0 0 3px 3px;margin-left:-1px}
.tabs button[aria-selected=true]{background:#fafafa;height:23px;padding:0 11px 0 10px;margin-left:0}`,
`<header><h2>Capas</h2><button aria-label="Desacoplar"><q-icon name="float"></q-icon></button><button aria-label="Cerrar panel"><q-icon name="close"></q-icon></button></header>
<div class="tools">${['brush', 'group', 'eye', 'funnel', 'eps', 'expand', 'collapse', 'remove'].map(n => `<button aria-label="${n}"><q-icon name="${n}"></q-icon>${n === 'eps' ? '<i></i>' : ''}</button>`).join('')}</div>
<ul class="tree"><li><check-field checked><span class="swatch"></span><b>poblacion</b></check-field></li></ul>
<div class="tabs" role="tablist"><button role="tab" aria-selected="true">Capas</button><button role="tab" aria-selected="false">Navegador</button></div>`);

/* ---------- map ---------- */
const NORTH = '275,720 262,690 258,680 248,668 244,650 236,640 232,628 220,615 205,600 197,588 190,562 180,552 168,533 155,520 135,507 111,495 95,488 72,473 70,460 84,457 92,447 88,433 72,420 76,402 66,392 70,385 58,374 60,345 78,333 80,325 95,305 112,290 132,282 136,280 136,290 143,318 132,322 134,328 122,328 120,338 130,340 124,355 128,356 138,344 158,353 175,360 188,357 192,368 200,378 207,392 216,392 228,393 236,388 236,375 250,368 255,370 254,352 260,325 268,310 272,295 275,281 288,278 307,250 316,249 400,220 440,190 480,142 492,102 503,100 499,70 488,62 475,41 484,43 492,46 500,42 504,37 514,38 528,48 545,60 560,70 565,90 570,103 585,112 600,120 618,126 626,142 628,154 638,162 652,162 658,178 653,196 670,210 690,206 715,213 735,205 748,200 755,189 770,199 790,201 803,206 815,195 825,198 840,212 858,214 870,225 880,233 834,306 845,312 860,312 872,325 880,335 887,343 882,350 872,340 860,345 856,334 840,338 828,338 820,350 800,354 775,357 748,360 730,373 715,381 698,392 676,405 674,425 665,445 655,462 646,476 650,488 656,500 652,508 630,518 616,530 609,540 611,562 598,570 596,577 606,588 614,600 610,605 622,622 628,645 640,652 645,664 655,675 668,690 660,703 650,714 680,716 692,719';
const SOUTH = '65,30 72,55 85,85 105,113 120,140 122,160 150,185 158,210 165,225 185,250 200,280 220,307 222,330 218,345 212,350 220,365 235,390 255,410 285,432 307,462 340,483 375,500 395,517 430,532 465,550 490,558 520,580 558,600 563,625 580,637 600,658 625,676 645,678 665,672 674,660 672,630 688,622 695,605 682,600 705,582 728,560 725,542 738,534 742,528 730,525 715,527 697,515 700,508 685,503 678,495 665,498 660,488 672,478 668,465 680,455 695,463 712,474 722,455 708,440 715,420 730,395 746,378 740,360 736,340 745,320 746,292 763,255 698,142 660,143 640,148 625,140 623,75 632,30 615,45 580,70 513,69 508,45 498,35 482,29';
const NLINES = ['78,333 95,337 110,341 122,338', '316,249 318,275 328,300 334,325 330,355 316,375 318,395 318,412 323,428', '323,428 345,437 365,443 382,452 390,468 405,466 418,468 428,478 445,478 460,476 476,472 484,485 484,520 480,527 448,530 445,545 433,565 440,580 441,595 456,610 452,640 452,665 460,695 470,712 480,715', '323,428 318,445 325,465 340,475 352,485 362,490 350,503 345,517 330,515 320,522 322,545 330,570 335,590 342,605 345,615 355,618 370,617 380,628 376,642 355,650', '253,368 253,395 250,410 262,428 250,450 253,465 270,485 285,505 298,520 304,539 322,538', '304,539 308,550 318,575 310,585 295,590 285,597 275,588 262,580 250,578 240,576 230,588 222,580 212,570 207,570 206,545 216,525 208,512 197,500 205,485 214,472 200,465 205,440 202,420 208,394', '200,468 187,462 175,448 163,434 155,455 135,467 111,495', '180,552 190,542 205,540', '355,650 370,655 390,652 410,654 420,650 432,668 437,650 446,640 441,650 448,670', '355,650 345,640 335,625 325,620 312,618 295,630 287,650 275,662 260,672 258,680', '355,650 365,668 380,690 392,702 388,712 378,718', '452,665 470,650 485,640 490,628 510,620 525,612 545,612 550,598 546,580 553,562 570,565 585,567 596,577', '480,715 500,710 515,692 530,682 530,668 545,655 553,665 548,690 545,718'];
const SLINES = ['168,25 166,45 175,55 180,70 172,88 150,105 130,122 105,113 110,95 122,93 120,102 110,108', '333,28 330,40 300,52 265,60 240,95 225,98 210,95 184,103 172,88', '335,28 350,60 355,85 370,112 340,135', '184,103 190,120 198,140 205,150 220,178 240,200 262,218 270,240 268,265', '205,150 215,150 225,135 240,130 255,132 270,125 290,130 300,118 325,130 340,135 360,143 380,145 390,150 397,125 408,125 415,145 418,165 410,190 412,200 424,215 410,235 385,232 370,238 355,235 340,215 315,215 305,215 300,235 280,250 268,265 262,290', '418,165 440,160 460,160 480,172 508,165 505,180 495,195 515,220 522,240 520,255 530,270 552,266 580,285 592,307 600,298 637,300 660,303 690,314 746,292', '508,165 513,143 575,140 583,120 600,98 623,75', '262,290 240,288 220,307', '262,290 253,312 270,320 272,345 300,362 325,366 326,320 318,312 340,308 355,295 360,280 358,255 340,238 355,235', '300,362 305,380 303,400 320,410 332,430 330,440 315,445 307,462', '330,440 345,442 350,455 368,460 375,472 385,460 400,455 415,460 430,460 445,445 455,415 462,410', '385,232 405,265 420,285 430,310 440,319', '395,300 410,315 440,319 460,315 490,330 515,350 518,370 500,390 485,398 488,408 462,410 440,408 412,418 412,390 405,350 398,335 392,315 395,300', '488,408 505,420 522,408 530,430 545,440 565,432 580,445 583,465 590,468', '637,300 630,325 605,345 606,365 595,385 595,405 585,412 590,435 592,470 595,490 603,508', '603,508 590,535 575,535 570,558 558,570 560,600', '603,508 625,508 637,530 655,550 658,560 650,575 635,568 628,585 610,598 600,625 580,637', '650,575 665,598 682,600', '335,28 338,10 332,0', '172,24 184,18 178,10 168,0', '655,448 665,445 670,450 658,452', '648,490 652,488 650,492', '680,486 684,492'];
/* coastlines get a small alternating jitter between the surveyed points */
const rough = s => { const p = s.split(' ').map(q => q.split(',').map(Number)); const o = [p[0]];
  for (let i = 1; i < p.length; i++) { const [a, b] = [p[i - 1], p[i]], l = Math.hypot(b[0] - a[0], b[1] - a[1]);
    if (l > 11 && l < 42) { const k = (i % 2 ? 1.6 : -1.6) / l; o.push([(a[0] * 2 + b[0]) / 3 - (b[1] - a[1]) * k, (a[1] * 2 + b[1]) / 3 + (b[0] - a[0]) * k], [(a[0] + b[0] * 2) / 3 + (b[1] - a[1]) * k, (a[1] + b[1] * 2) / 3 - (b[0] - a[0]) * k]); }
    o.push(b); } return o.map(q => q.map(n => n.toFixed(1)).join(',')).join(' '); };
const lines = a => a.map(p => `<polyline points="${rough(p)}"/>`).join('');
define('map-canvas', ':host{display:block;flex:1;min-width:0;background:#fff;border:1px solid #b4b4b4;border-right:0}svg{display:block;width:340px;height:480px;margin:1px 0 0 18px}',
`<svg viewBox="0 0 1020 1440" role="img" aria-label="Mapa de la capa poblacion"><g fill="none" stroke="#333" stroke-width="3" stroke-linejoin="round">
<path d="M275 710L692 712V728L275 728z" fill="#8f8f8f" stroke="none"/>
<polyline points="${rough(NORTH)}" fill="#8f8f8f"/>${lines(NLINES)}
<g transform="translate(210 690)"><polyline points="${rough(SOUTH)}" fill="#8f8f8f"/><path d="M70 22H470V40H75z" fill="#8f8f8f" stroke="none"/>${lines(SLINES)}
<path d="M245 0l10 15 13 9 22-6 10-18M165 0l13 10 6 8-16 7" /><path d="M222 138l8-2 5 8-6 4zM662 484l12 2 6 8-10 6-10-6z" fill="#fff" stroke-width="1"/></g></g></svg>`);

/* ---------- virtual layer dialog ---------- */
define('virtual-layer-dialog', `
:host{display:block;width:688px;border:2px solid #2a2a2a;border-radius:8px;background:linear-gradient(110deg,#fff 30%,#f1f1f1 36%,#fff 42%,#f0f0f0 48%,#fff 54%,#f4f4f4 62%,#fff 70%);padding:0 5px 5px;box-shadow:2px 4px 12px 3px #000b;--bold:700 11px/16px "DejaVu Sans Condensed","DejaVu Sans",sans-serif}
header{display:flex;align-items:center;height:28px;gap:5px;font-size:12px}
header q-icon{width:16px;height:16px;margin-left:1px}
h2{font:inherit;margin:0 auto 0 0}
.x{align-self:flex-start;width:47px;height:18px;padding:0;border:1px solid #4c1712;border-top:0;border-radius:0 0 4px 4px;background:linear-gradient(#e5a197,#d16d5f 45%,#b8311c 50%,#cf6048);display:grid;place-items:center;box-shadow:inset 0 0 0 1px #f0b9b0}
.x svg{width:14px;height:12px}
.body{border:1px solid #7b7b7b;background:#f0f0f0;padding:11px 11px 11px 10px;display:flex;flex-direction:column}
.name{display:flex;align-items:center;gap:4px}.name span{padding-top:2px}.name edit-combo{width:89px}
h3{font:var(--bold);margin:0;display:flex;align-items:center;gap:7px;height:24px;padding:6px 0 0 4px}
h3.plain{padding-left:2px}
h3 i{border:5px solid transparent;border-top:7px solid #333;border-bottom:0}
h3 i.r{border:5px solid transparent;border-left:7px solid #333;border-right:0;margin:0 2px 0 1px}
.box{margin-left:2px;border:1px solid #d6d6d6;background:#ececec;border-radius:2px;padding:10px 11px 11px 10px}
.grid{height:91px;border:1px solid #b4b4b4;background:#fff}
table{width:100%;border-collapse:separate;border-spacing:0;table-layout:fixed;font-size:12px}
th{font:var(--bold);height:19px;padding:1px 0 0;border-right:1px solid #c4c4c4;border-bottom:1px solid #b4b4b4;background:linear-gradient(#fff,#f0f0f0)}th:last-child{border-right:0}
col.n{width:100px}
td{height:29px;padding:0;background:#3399ff;color:#fff;white-space:nowrap;border-bottom:1px solid #b4b4b4}
td.first{padding-left:3px}td input{width:100%;height:28px;border:1px solid #b4b4b4;border-radius:2px;background:linear-gradient(#fdfdfd,#f2f2f2);padding:0 4px;outline:0;color:#000;display:block}
td pick-list{width:137px;height:28px;color:#000;z-index:1}
td.path{padding-left:36px}td.path div{overflow:hidden;text-indent:-2px}
.btns{display:flex;gap:6px;margin-top:6px}
.code{height:91px;border:1px solid #b4b4b4;background:linear-gradient(90deg,#f0f0f0 14px,#fff 14px);padding:1px 0 0 15px;font:12px/17px "DejaVu Sans Condensed","DejaVu Sans",sans-serif;outline:0;white-space:pre;color:#3f8f93}
.code b{color:#8959a8}.code i{font-style:normal;color:#4f6fae}
.id{display:flex;align-items:center;gap:8px;margin-top:6px}.id input{flex:1;height:22px;border:1px solid #b0b0b0;border-radius:3px;background:#ededed}
h3.geo{height:20px;margin:5px 0;padding-top:0}
.foot{display:flex;gap:6px}.foot :first-child{margin-right:auto}`,
`<header><q-icon name="logo"></q-icon><h2>Crear una capa virtual</h2><button class="x" aria-label="Cerrar ventana"><svg viewBox="0 0 14 12"><path d="M2 1h3l2 3 2-3h3L9 6l3 5H9L7 8l-2 3H2l3-5z" fill="#fff" stroke="#545"/></svg></button></header>
<div class="body">
<div class="name"><span>Nombre de la capa</span><edit-combo label="Nombre de la capa" value="virtual_layer"></edit-combo></div>
<h3><i></i>Capas empotradas</h3>
<section class="box"><div class="grid"><table><colgroup><col class="n"><col class="n"><col class="n"><col></colgroup>
<thead><tr><th>Nombre local</th><th>Proveedor</th><th>Codificación</th><th>Fuente</th></tr></thead>
<tbody><tr><td class="first">capa1</td><td><input aria-label="Proveedor" value="ogr"></td><td><pick-list flat label="Codificación" value="UTF-8"></pick-list></td><td class="path"><div>PostGis\\myGithub\\select\\shp\\poblacion.shp</div></td></tr></tbody></table></div>
<div class="btns"><push-button>Añadir</push-button><push-button>Importar</push-button><push-button>Eliminar</push-button></div></section>
<h3 class="plain">Consulta</h3>
<section class="box"><div class="code" contenteditable="true" role="textbox" aria-multiline="true" aria-label="Consulta" spellcheck="false"><b>SELECT</b> <i>*</i>
<b>FROM</b> capa1</div></section>
<div class="id"><check-field>Columna de identificador único</check-field><input aria-label="Columna de identificador único" disabled></div>
<h3 class="geo"><i class="r"></i>Geometría</h3>
<div class="foot"><push-button primary>Prueba</push-button><push-button>Cerrar</push-button><push-button><u>A</u>ñadir</push-button><push-button>Ayuda</push-button></div>
</div>`);

define('hover-tip', ':host{display:block;border:2px solid #000;background:#ffffe1;font-size:12px;line-height:17px;padding:0 2px;white-space:nowrap;box-shadow:3px 3px 3px #0006}', '<slot></slot>');

/* ---------- status bar ---------- */
define('status-bar', `
:host{display:flex;align-items:center;height:29px;padding:0 7px 0 4px;border-bottom:1px solid #222}
.find{display:flex;align-items:center;width:255px;height:22px;background:#fff;border:1px solid #aaa;border-radius:3px;padding-left:8px;gap:6px;margin-right:auto}
.find input{flex:1;min-width:0;border:0;padding:0;outline:0;background:none}.find input::placeholder{color:#8a8a8a;opacity:1}
.find q-icon{width:13px;height:13px}
.xy{width:102px;height:22px;border:1px solid #aaa;border-radius:3px;background:#fff;text-align:center;padding:0;margin:0 4px}
q-icon{width:16px;height:16px}
edit-combo{width:81px;margin:0 10px 0 3px}
.amp{width:88px;margin:0 9px 0 3px}.rot{width:84px;margin:0 7px 0 9px}
.esc{margin-left:10px}.am{margin-left:4px}.crs{border:0;background:none;padding:0;display:flex;align-items:center;gap:3px;margin:0 19px 0 17px}
.msg{border:0;background:none;padding:0;display:flex}`,
`<div class="find"><q-icon name="search"></q-icon><input aria-label="Localizar" placeholder="Escriba para localizar (Ctrl+K)"></div>
<span>Coordenada</span><input class="xy" aria-label="Coordenada" value="-336043,9903913"><q-icon name="mouse"></q-icon>
<span class="esc">Escala</span><edit-combo clip label="Escala" value="1:17265792"></edit-combo><q-icon name="lock"></q-icon>
<span class="am">Amplificador</span><spin-box class="amp" label="Amplificador" value="100%"></spin-box>
<span>Rotación</span><spin-box class="rot" label="Rotación" value="0.0 °"></spin-box>
<check-field checked>Representar</check-field>
<button class="crs"><q-icon name="globe"></q-icon>EPSG:32718</button><button class="msg" aria-label="Mensajes"><q-icon name="chat"></q-icon></button>`);

define('qgis-window', `
:host{display:flex;flex-direction:column;height:100vh;position:relative}
main{flex:1;min-height:0;display:flex;gap:6px}
virtual-layer-dialog{position:absolute;top:210px;right:54px}
hover-tip{position:absolute;right:5px;top:666px}`,
`<title-bar></title-bar><menu-bar></menu-bar><tool-area></tool-area>
<main><layer-panel></layer-panel><map-canvas></map-canvas></main>
<status-bar></status-bar>
<virtual-layer-dialog></virtual-layer-dialog><hover-tip>Añadir capas seleccionadas al mapa</hover-tip>`);
</script>
</body>
</html>
